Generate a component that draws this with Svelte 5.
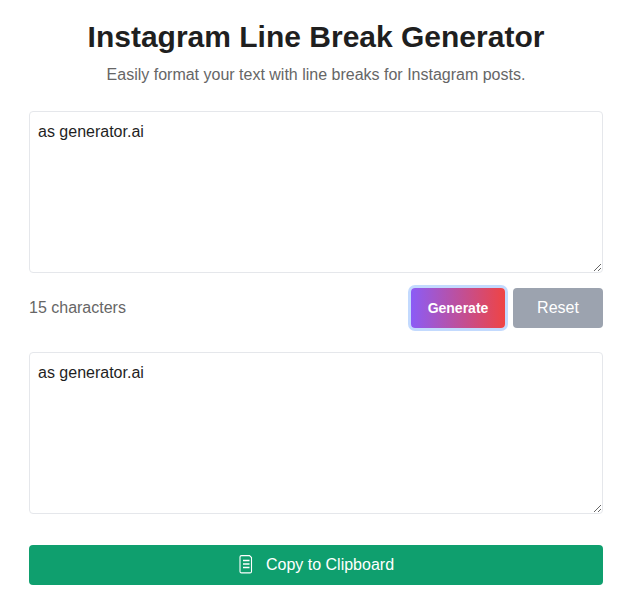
<script>
  let input = $state("as generator.ai");
  let output = $state("as generator.ai");
</script>

<main class="page">
  <h1>Instagram Line Break Generator</h1>
  <p class="sub">Easily format your text with line breaks for Instagram posts.</p>

  <textarea class="box" bind:value={input}></textarea>

  <div class="controls">
    <span class="count">{input.length} characters</span>
    <div class="actions">
      <button class="generate">Generate</button>
      <button class="reset">Reset</button>
    </div>
  </div>

  <textarea class="box second" readonly bind:value={output}></textarea>

  <button class="copy">
    <svg width="16" height="20" viewBox="0 0 16 20" fill="none" stroke="currentColor">
      <path stroke-width="1.1" d="M3.5 .6h8l2 2v13.8a1.5 1.5 0 0 1-1.5 1.5H3.5A1.5 1.5 0 0 1 2 16.4V2.1A1.5 1.5 0 0 1 3.5 .6z" />
      <path stroke-width="1.5" d="M5 5.5h6.5M5 9h6.5M5 12.5h6.5" />
    </svg>
    Copy to Clipboard
  </button>
</main>

<style>
  :global(body) {
    margin: 0;
    background: #fff;
    color: #1f2937;
    font-family: "Liberation Sans", Arial, sans-serif;
  }

  .page {
    box-sizing: border-box;
    width: 632px;
    padding: 17px 29px 0;
    display: flex;
    flex-direction: column;
  }

  h1 {
    margin: 0;
    font-size: 30px;
    line-height: 40px;
    font-weight: 700;
    text-align: center;
    color: #1f1f1f;
  }

  .sub {
    margin: 6px 0 0;
    font-size: 16px;
    line-height: 24px;
    text-align: center;
    color: #666;
  }

  .box {
    display: block;
    box-sizing: border-box;
    width: 100%;
    height: 162px;
    margin-top: 24px;
    padding: 8px;
    border: 1px solid #e5e7eb;
    border-radius: 4px;
    font-family: inherit;
    font-size: 16px;
    line-height: 24px;
    color: #1f1f1f;
    outline: none;
  }

  .second {
    margin-top: 0;
  }

  .controls {
    display: flex;
    align-items: center;
    justify-content: space-between;
    height: 40px;
    margin: 15px 0 24px;
  }

  .count {
    font-size: 16px;
    color: #666;
  }

  .actions {
    display: flex;
    gap: 8px;
  }

  button {
    border: 0;
    border-radius: 4px;
    color: #fff;
    font-family: inherit;
    font-size: 16px;
    cursor: pointer;
  }

  .generate {
    width: 94px;
    height: 40px;
    font-size: 14px;
    font-weight: 700;
    background: linear-gradient(to right, #8b5cf6, #ef4444);
    box-shadow: 0 0 0 3px #c3dafe;
  }

  .reset {
    width: 90px;
    height: 40px;
    background: #9ca3af;
  }

  .copy {
    display: flex;
    align-items: center;
    justify-content: center;
    gap: 12px;
    height: 40px;
    margin-top: 31px;
    background: #0f9f6e;
  }
</style>
